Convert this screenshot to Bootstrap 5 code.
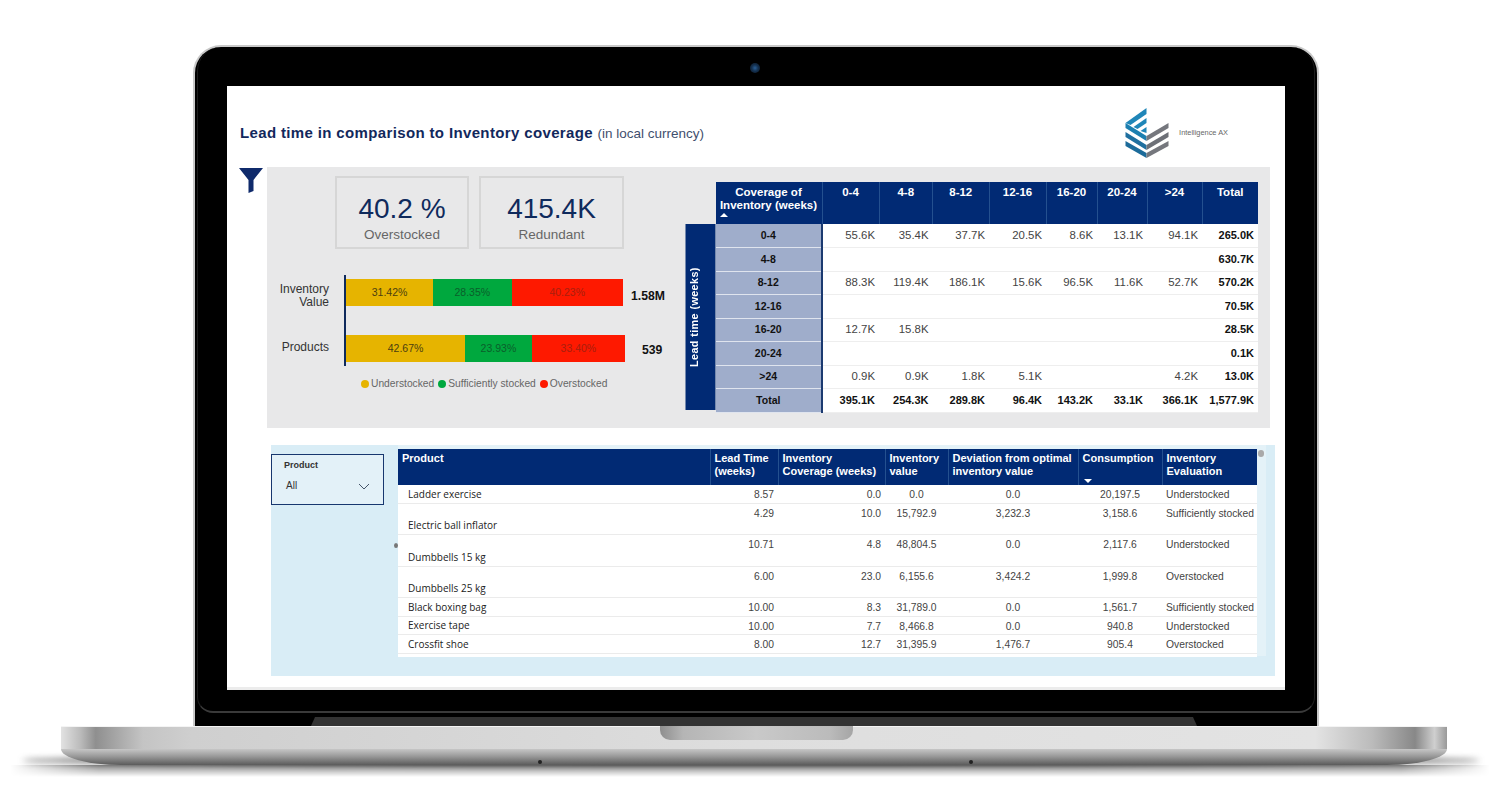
<!DOCTYPE html>
<html lang="en">
<head>
    <meta charset="UTF-8">
    <meta name="viewport" content="width=device-width, initial-scale=1.0">
    <title>Lead time in comparison to Inventory coverage</title>
    <link href="https://cdn.jsdelivr.net/npm/bootstrap@5.3.0/dist/css/bootstrap.min.css" rel="stylesheet">
    <style>
        body {
            font-family: "Liberation Sans", Arial, sans-serif;
            background-color: #fff;
            padding-top: 45px;
            overflow: hidden;
        }
        /* laptop frame */
        .lap-lid {
            position: relative;
            width: 1126px;
            height: 681px;
            margin-left: 193px;
            padding: 39px 0 0 32px;
            background-color: #000;
            border: 2px solid #c9c9c9;
            border-bottom: 0;
            border-radius: 28px 28px 0 0;
        }
        .lap-lid::after {
            content: "";
            position: absolute;
            inset: 0 2px 13px 2px;
            border: 1px solid #1d1d1d;
            border-top: 0;
            border-bottom: 2px solid #3a3a3a;
            border-radius: 24px 24px 16px 16px;
            pointer-events: none;
        }
        .lap-cam {
            position: absolute;
            top: 16px;
            left: 555px;
            width: 10px;
            height: 10px;
            border-radius: 50%;
            background: radial-gradient(circle, #2a5f96 0, #14304f 45%, #0b1520 100%);
        }
        .lap-hinge {
            width: 886px;
            height: 9px;
            margin: 27px 0 0 84px;
            background-color: #333;
            clip-path: polygon(4px 0, 882px 0, 100% 100%, 0 100%);
        }
        .lap-base {
            position: relative;
            width: 1386px;
            height: 23px;
            margin-left: 61px;
            border-top: 1px solid #f4f4f4;
            background: linear-gradient(to right, #e2e2e2 0, #bbb 1.4%, #8f8f8f 2.5%, #c4c4c4 5.9%, #cfcfcf 9.4%, #dedede 49.7%, #e3e3e3 90.5%, #bbb 94.6%, #888 97.7%, #cfcfcf 99.1%, #999 100%);
        }
        .lap-notch {
            position: absolute;
            top: -1px;
            left: 599px;
            width: 193px;
            height: 14px;
            border-radius: 0 0 10px 10px;
            background: linear-gradient(to right, #8e8e8e 0, #b5b5b5 12%, #c9c9c9 50%, #bbb 88%, #a5a5a5 100%);
        }
        .lap-bottom {
            position: relative;
            z-index: 1;
            width: 1386px;
            height: 16px;
            margin-left: 61px;
            border-radius: 0 0 60px 60px / 0 0 16px 16px;
            background: linear-gradient(to bottom, #c6c6c6 0, #9a9a9a 45%, #5b5b5b 100%);
        }
        .lap-dot {
            position: absolute;
            top: 11px;
            width: 4px;
            height: 4px;
            border-radius: 50%;
            background-color: #222;
        }
        .lap-shadow {
            position: relative;
            width: 1480px;
            height: 12px;
            margin-left: 10px;
            background: linear-gradient(to bottom, rgba(0, 0, 0, .45), rgba(0, 0, 0, 0));
            -webkit-mask-image: linear-gradient(to right, transparent 0, #000 6%, #000 94%, transparent 100%);
            mask-image: linear-gradient(to right, transparent 0, #000 6%, #000 94%, transparent 100%);
        }
        .lap-spread {
            position: absolute;
            top: 756px;
            left: 22px;
            width: 1458px;
            height: 9px;
            border-radius: 50%;
            background-color: #444;
            filter: blur(3px);
        }
        /* screen */
        .scr {
            width: 1058px;
            height: 604px;
            background-color: #fff;
            border-bottom: 3px solid #ececec;
        }
        .scr-head {
            padding: 21px 57px 9px 13px;
        }
        .scr-title {
            padding-top: 2px;
            font-size: 15px;
            font-weight: 700;
            letter-spacing: .36px;
            color: #12285c;
        }
        .scr-title span {
            font-size: 13.5px;
            font-weight: 400;
            letter-spacing: 0;
            color: #3f4f6e;
        }
        .logo-name {
            font-size: 7.4px;
            font-weight: 400;
            color: #666;
            margin-left: 9px;
        }
        .filter-ico {
            width: 24px;
            height: 25px;
            margin: 1px 4px 0 12px;
            flex: none;
        }
        .grey-pane {
            width: 1003px;
            height: 261px;
            background-color: #e8e8e9;
        }
        .left-pane {
            width: 419px;
            flex: none;
            padding-top: 9px;
        }
        .kpi-row {
            gap: 10px;
            margin-left: 68px;
        }
        .kpi-box {
            height: 73px;
            border: 2px solid #d6d6d6;
            text-align: center;
            color: #666;
            font-size: 13.5px;
            line-height: 16px;
            padding-top: 12px;
        }
        .kpi-a { width: 134px; }
        .kpi-b { width: 145px; }
        .kpi-num {
            font-size: 28px;
            line-height: 37px;
            color: #0f2a5c;
        }
        .bars {
            margin-top: 26px;
        }
        .bar-name {
            width: 62px;
            flex: none;
            margin-right: 15px;
            text-align: right;
            font-size: 12px;
            line-height: 13px;
            color: #333;
        }
        .bar-track {
            width: 281px;
            flex: none;
            border-left: 2px solid #0f2a5c;
            padding: 4px 0 14.5px;
        }
        .bar-track.second { padding: 14.5px 0 4px; }
        .bar-track .progress {
            height: 27px;
            border-radius: 0;
            background-color: transparent;
            font-size: 10.5px;
        }
        .bar-track.first .progress { width: 277px; }
        .seg-y { background-color: #e6b400; color: #4c3f10; }
        .seg-g { background-color: #00a83e; color: #0b5f2b; }
        .seg-r { background-color: #fe1900; color: #a81f0e; }
        .bar-sum {
            margin-left: 6px;
            font-size: 12.2px;
            font-weight: 700;
            color: #111;
        }
        .bar-sum.small-sum { margin-left: 17px; }
        .legend-row {
            margin: 12px 0 0 94px;
            font-size: 10.25px;
            line-height: 12px;
            color: #666;
        }
        .legend-dot {
            width: 8px;
            height: 8px;
            border-radius: 50%;
            margin-right: 2px;
            flex: none;
        }
        .legend-row > span:not(.legend-dot) { margin-right: 4px; }
        /* coverage matrix */
        .right-pane {
            padding-top: 15px;
        }
        .side-label {
            width: 29.5px;
            height: 186px;
            margin-top: 42px;
            flex: none;
            background-color: #012a74;
            color: #fff;
            font-size: 10.8px;
            font-weight: 700;
            letter-spacing: .4px;
            writing-mode: vertical-rl;
            transform: rotate(180deg);
            text-align: center;
        }
        .mx-tbl {
            width: 542.5px;
            table-layout: fixed;
            margin: 0;
        }
        .mx-tbl th, .mx-tbl td {
            padding: 0 4px 0 0;
            height: 23.5px;
            border-bottom: 1px solid #eeeeee;
            background-color: #fff;
            color: #444;
            font-size: 11.4px;
            line-height: 13px;
            text-align: right;
            vertical-align: middle;
            font-weight: 400;
            box-shadow: none;
        }
        .mx-tbl thead th {
            height: 42px;
            padding: 4px 0 0;
            background-color: #012a74;
            border-bottom: 0;
            border-right: 1px solid #24508f;
            color: #fff;
            font-size: 11.5px;
            font-weight: 700;
            text-align: center;
            vertical-align: top;
        }
        .mx-tbl thead th:last-child { border-right: 0; }
        .mx-tbl tbody th {
            padding: 0;
            background-color: #9fadcb;
            border-bottom: 1px solid #dfe4ee;
            border-right: 2px solid #1b3a70;
            color: #111;
            font-size: 10.5px;
            font-weight: 700;
            text-align: center;
        }
        .mx-tbl .sum-col, .mx-tbl .sum-row td {
            color: #111;
            font-weight: 700;
            font-size: 11px;
        }
        .sort-up {
            display: block;
            width: 0;
            height: 0;
            margin: 1px 0 0 4px;
            border: 4px solid transparent;
            border-top: 0;
            border-bottom: 4px solid #fff;
        }
        /* lower part */
        .blue-pane {
            width: 1004px;
            height: 231px;
            margin: 17px 0 0 44px;
            background-color: #d9edf6;
        }
        .slicer {
            width: 113px;
            height: 51px;
            margin: 9px 14px 0 0;
            flex: none;
            border: 1.5px solid #17376f;
            background-color: #e3f1f8;
            padding: 4px 0 0 12px;
            color: #333;
        }
        .slicer-name {
            font-size: 9px;
            font-weight: 700;
            line-height: 12px;
        }
        .slicer-val {
            margin: 9px 13px 0 2px;
            font-size: 10px;
            line-height: 12px;
        }
        .tbl-pane {
            width: 868px;
            height: 211px;
            flex: none;
            background-color: #e4f2f8;
            padding-top: 4px;
            position: relative;
        }
        .scroll-thumb {
            position: absolute;
            top: 5px;
            right: 2px;
            width: 6px;
            height: 7px;
            border-radius: 3px;
            background-color: #a9a9a9;
        }
        .grip-dot {
            position: absolute;
            top: 98px;
            left: -4px;
            width: 4px;
            height: 5px;
            border-radius: 50%;
            background-color: #777;
        }
        .prod-tbl {
            width: 859px;
            table-layout: fixed;
            margin: 0;
            background-color: #fff;
        }
        .prod-tbl th, .prod-tbl td {
            padding: 3px 4px 0;
            border-bottom: 1px solid #ebebeb;
            background-color: #fff;
            color: #444;
            font-size: 10.3px;
            line-height: 13px;
            vertical-align: top;
            font-weight: 400;
            box-shadow: none;
            white-space: nowrap;
        }
        .prod-tbl thead th {
            height: 36px;
            padding: 3px 3px 0 4px;
            background-color: #012a74;
            border-bottom: 0;
            border-right: 1px solid #24508f;
            color: #fff;
            font-size: 11px;
            line-height: 12.5px;
            font-weight: 700;
            position: relative;
        }
        .prod-tbl thead th:last-child { border-right: 0; }
        .prod-tbl td.pname {
            padding: 0 0 2px 10px;
            vertical-align: bottom;
            font-family: "Open Sans", "Liberation Sans", sans-serif;
            font-size: 10px;
            color: #222;
        }
        .tbl-foot {
            width: 859px;
            height: 3px;
            background-color: #fff;
        }
        .row-s { height: 18.7px; }
        .row-l { height: 31.3px; }
        .num-r { text-align: right; }
        .num-c { text-align: center; }
        .sort-down {
            position: absolute;
            left: 5px;
            bottom: 2px;
            width: 0;
            height: 0;
            border: 4px solid transparent;
            border-bottom: 0;
            border-top: 4px solid #fff;
        }
    </style>
</head>
<body>
    <div class="lap-lid">
        <div class="lap-cam"></div>
        <div class="scr">
            <!-- title -->
            <div class="scr-head d-flex align-items-center justify-content-between">
                <div class="scr-title">Lead time in comparison to Inventory coverage <span>(in local currency)</span></div>
                <div class="d-flex align-items-center">
                    <svg width="45" height="51" viewBox="1 0 44 51">
                        <polygon points="1,16 22,1 22,7 6,18" fill="#1f86b8"/>
                        <polygon points="9,20 22,11 22,16 13,22" fill="#1f86b8"/>
                        <polygon points="16,24 22,20 22,26" fill="#1f86b8"/>
                        <polygon points="1,16 22,29 22,34 1,21" fill="#1c7fb0"/>
                        <polygon points="22,29 44,16 44,21 22,34" fill="#75777d"/>
                        <polygon points="1,25 22,38 22,43 1,30" fill="#1f6f9f"/>
                        <polygon points="22,38 44,25 44,30 22,43" fill="#6d7077"/>
                        <polygon points="1,34 22,46 22,51 1,39" fill="#1c6b9a"/>
                        <polygon points="22,46 44,34 44,39 22,51" fill="#75777d"/>
                    </svg>
                    <span class="logo-name">Intelligence AX</span>
                </div>
            </div>
            <!-- top charts -->
            <div class="d-flex">
                <svg class="filter-ico" viewBox="0 0 24 25">
                    <polygon points="0,0 24,0 14.5,12 14.5,23 9.5,25 9.5,12" fill="#0f2a6b"/>
                </svg>
                <div class="grey-pane d-flex">
                    <div class="left-pane">
                        <div class="kpi-row d-flex">
                            <div class="kpi-box kpi-a"><div class="kpi-num">40.2 %</div>Overstocked</div>
                            <div class="kpi-box kpi-b"><div class="kpi-num">415.4K</div>Redundant</div>
                        </div>
                        <div class="bars">
                            <div class="d-flex align-items-start">
                                <div class="bar-name pt-2">Inventory<br>Value</div>
                                <div class="bar-track first">
                                    <div class="progress">
                                        <div class="progress-bar seg-y" style="width: 31.42%">31.42%</div>
                                        <div class="progress-bar seg-g" style="width: 28.35%">28.35%</div>
                                        <div class="progress-bar seg-r" style="width: 40.23%">40.23%</div>
                                    </div>
                                </div>
                                <div class="bar-sum pt-2 mt-1">1.58M</div>
                            </div>
                            <div class="d-flex align-items-start">
                                <div class="bar-name pt-3 mt-1 mb-0">Products</div>
                                <div class="bar-track second">
                                    <div class="progress">
                                        <div class="progress-bar seg-y" style="width: 42.67%">42.67%</div>
                                        <div class="progress-bar seg-g" style="width: 23.93%">23.93%</div>
                                        <div class="progress-bar seg-r" style="width: 33.40%">33.40%</div>
                                    </div>
                                </div>
                                <div class="bar-sum small-sum pt-3 mt-1">539</div>
                            </div>
                        </div>
                        <div class="legend-row d-flex align-items-center">
                            <span class="legend-dot seg-y"></span><span>Understocked</span>
                            <span class="legend-dot seg-g"></span><span>Sufficiently stocked</span>
                            <span class="legend-dot seg-r"></span><span>Overstocked</span>
                        </div>
                    </div>
                    <div class="right-pane d-flex align-items-start">
                        <div class="side-label">Lead time (weeks)</div>
                        <table class="table mx-tbl">
                            <colgroup>
                                <col style="width: 106.5px"><col style="width: 57px"><col style="width: 53.5px"><col style="width: 56.5px"><col style="width: 57px"><col style="width: 51px"><col style="width: 50px"><col style="width: 55px"><col style="width: 56px">
                            </colgroup>
                            <thead>
                                <tr>
                                    <th>Coverage of<br>Inventory (weeks)<span class="sort-up"></span></th>
                                    <th>0-4</th><th>4-8</th><th>8-12</th><th>12-16</th><th>16-20</th><th>20-24</th><th>&gt;24</th><th>Total</th>
                                </tr>
                            </thead>
                            <tbody>
                                <tr><th>0-4</th><td>55.6K</td><td>35.4K</td><td>37.7K</td><td>20.5K</td><td>8.6K</td><td>13.1K</td><td>94.1K</td><td class="sum-col">265.0K</td></tr>
                                <tr><th>4-8</th><td></td><td></td><td></td><td></td><td></td><td></td><td></td><td class="sum-col">630.7K</td></tr>
                                <tr><th>8-12</th><td>88.3K</td><td>119.4K</td><td>186.1K</td><td>15.6K</td><td>96.5K</td><td>11.6K</td><td>52.7K</td><td class="sum-col">570.2K</td></tr>
                                <tr><th>12-16</th><td></td><td></td><td></td><td></td><td></td><td></td><td></td><td class="sum-col">70.5K</td></tr>
                                <tr><th>16-20</th><td>12.7K</td><td>15.8K</td><td></td><td></td><td></td><td></td><td></td><td class="sum-col">28.5K</td></tr>
                                <tr><th>20-24</th><td></td><td></td><td></td><td></td><td></td><td></td><td></td><td class="sum-col">0.1K</td></tr>
                                <tr><th>&gt;24</th><td>0.9K</td><td>0.9K</td><td>1.8K</td><td>5.1K</td><td></td><td></td><td>4.2K</td><td class="sum-col">13.0K</td></tr>
                                <tr class="sum-row"><th>Total</th><td>395.1K</td><td>254.3K</td><td>289.8K</td><td>96.4K</td><td>143.2K</td><td>33.1K</td><td>366.1K</td><td>1,577.9K</td></tr>
                            </tbody>
                        </table>
                    </div>
                </div>
            </div>
            <!-- product table -->
            <div class="blue-pane d-flex">
                <div class="slicer">
                    <div class="slicer-name">Product</div>
                    <div class="slicer-val d-flex justify-content-between align-items-center">
                        <span>All</span>
                        <svg width="12" height="7" viewBox="0 0 12 7"><path d="M1 1l5 5 5-5" fill="none" stroke="#44546a" stroke-width="1"/></svg>
                    </div>
                </div>
                <div class="tbl-pane">
                    <span class="grip-dot"></span>
                    <span class="scroll-thumb"></span>
                    <table class="table prod-tbl">
                        <colgroup>
                            <col style="width: 312px"><col style="width: 68px"><col style="width: 107px"><col style="width: 63px"><col style="width: 130px"><col style="width: 84px"><col style="width: 95px">
                        </colgroup>
                        <thead>
                            <tr>
                                <th>Product</th>
                                <th>Lead Time<br>(weeks)</th>
                                <th>Inventory<br>Coverage (weeks)</th>
                                <th>Inventory<br>value</th>
                                <th>Deviation from optimal<br>inventory value</th>
                                <th>Consumption<span class="sort-down"></span></th>
                                <th>Inventory<br>Evaluation</th>
                            </tr>
                        </thead>
                        <tbody>
                            <tr class="row-s"><td class="pname">Ladder exercise</td><td class="num-r">8.57</td><td class="num-r">0.0</td><td class="num-c">0.0</td><td class="num-c">0.0</td><td class="num-c">20,197.5</td><td>Understocked</td></tr>
                            <tr class="row-l"><td class="pname">Electric ball inflator</td><td class="num-r">4.29</td><td class="num-r">10.0</td><td class="num-c">15,792.9</td><td class="num-c">3,232.3</td><td class="num-c">3,158.6</td><td>Sufficiently stocked</td></tr>
                            <tr class="row-l"><td class="pname">Dumbbells 15 kg</td><td class="num-r">10.71</td><td class="num-r">4.8</td><td class="num-c">48,804.5</td><td class="num-c">0.0</td><td class="num-c">2,117.6</td><td>Understocked</td></tr>
                            <tr class="row-l"><td class="pname">Dumbbells 25 kg</td><td class="num-r">6.00</td><td class="num-r">23.0</td><td class="num-c">6,155.6</td><td class="num-c">3,424.2</td><td class="num-c">1,999.8</td><td>Overstocked</td></tr>
                            <tr class="row-s"><td class="pname">Black boxing bag</td><td class="num-r">10.00</td><td class="num-r">8.3</td><td class="num-c">31,789.0</td><td class="num-c">0.0</td><td class="num-c">1,561.7</td><td>Sufficiently stocked</td></tr>
                            <tr class="row-s"><td class="pname">Exercise tape</td><td class="num-r">10.00</td><td class="num-r">7.7</td><td class="num-c">8,466.8</td><td class="num-c">0.0</td><td class="num-c">940.8</td><td>Understocked</td></tr>
                            <tr class="row-s"><td class="pname">Crossfit shoe</td><td class="num-r">8.00</td><td class="num-r">12.7</td><td class="num-c">31,395.9</td><td class="num-c">1,476.7</td><td class="num-c">905.4</td><td>Overstocked</td></tr>
                        </tbody>
                    </table>
                    <div class="tbl-foot"></div>
                </div>
            </div>
        </div>
        <div class="lap-hinge"></div>
    </div>
    <div class="lap-spread"></div>
    <div class="lap-base"><div class="lap-notch"></div></div>
    <div class="lap-bottom">
        <span class="lap-dot" style="left: 477px"></span>
        <span class="lap-dot" style="left: 908px"></span>
    </div>
    <div class="lap-shadow"></div>
    <script src="https://cdn.jsdelivr.net/npm/bootstrap@5.3.0/dist/js/bootstrap.bundle.min.js"></script>
</body>
</html>
